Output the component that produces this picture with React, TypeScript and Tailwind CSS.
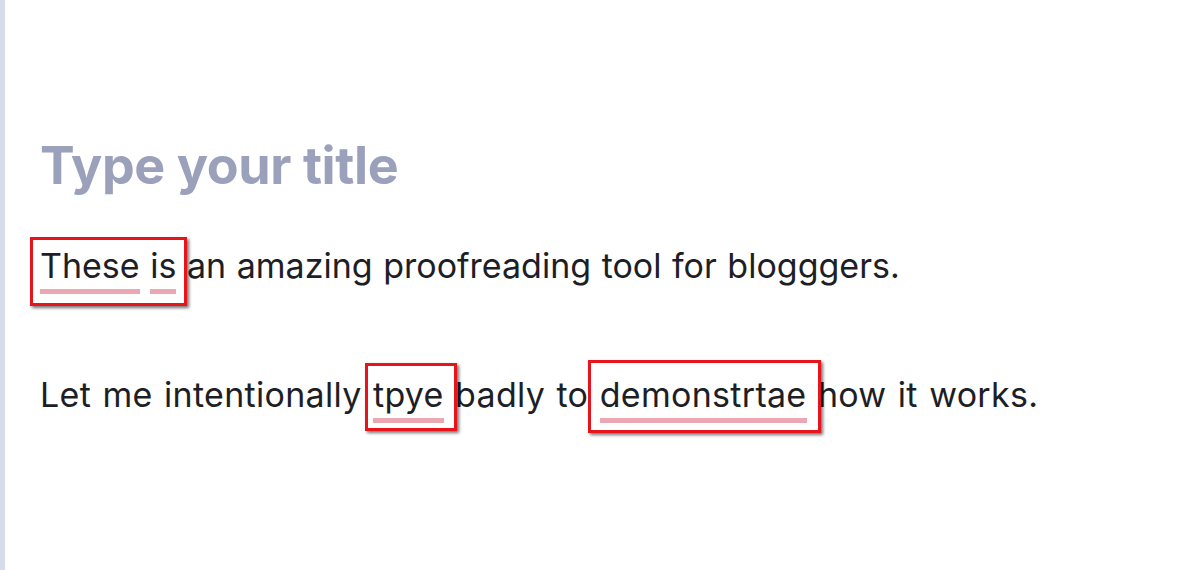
import React from "react";

function Flag({ children, box }: { children: React.ReactNode; box: string }) {
  return (
    <span className="relative">
      {children}
      <span
        className={`pointer-events-none absolute border-[3px] border-[#e8141b] shadow-[2px_2px_3px_rgba(0,0,0,0.55)] ${box}`}
      />
    </span>
  );
}

function Typo({ children }: { children: React.ReactNode }) {
  return (
    <span className="relative">
      {children}
      <span className="absolute left-0 right-0 -bottom-[8px] h-[5px] bg-[#eca8b2]" />
    </span>
  );
}

export default function App() {
  return (
    <div className="h-[570px] overflow-hidden border-l-[5px] border-[#d7dce8] bg-white pl-[35px] pt-[136px] font-['Inter',sans-serif] text-[#1d1e26]">
      <h1 className="text-[52px] font-bold leading-[60px] tracking-[-0.4px] text-[#9ba1ba]">Type your title</h1>

      <p className="mt-[48px] text-[34px] leading-[44px] [word-spacing:1px]">
        <Flag box="-left-[10px] -right-[11px] -top-[8px] -bottom-[20px]">
          <Typo>These</Typo> <Typo>is</Typo>
        </Flag>{" "}
        an amazing proofreading tool for blogggers.
      </p>

      <p className="mt-[85px] text-[34px] leading-[44px] tracking-[0.3px] [word-spacing:1.5px]">
        Let me intentionally{" "}
        <Flag box="-left-[8px] -right-[13px] -top-[11px] -bottom-[16px]">
          <Typo>tpye</Typo>
        </Flag>{" "}
        badly to{" "}
        <Flag box="-left-[12px] -right-[14px] -top-[14px] -bottom-[18px]">
          <Typo>demonstrtae</Typo>
        </Flag>{" "}
        how it works.
      </p>
    </div>
  );
}
